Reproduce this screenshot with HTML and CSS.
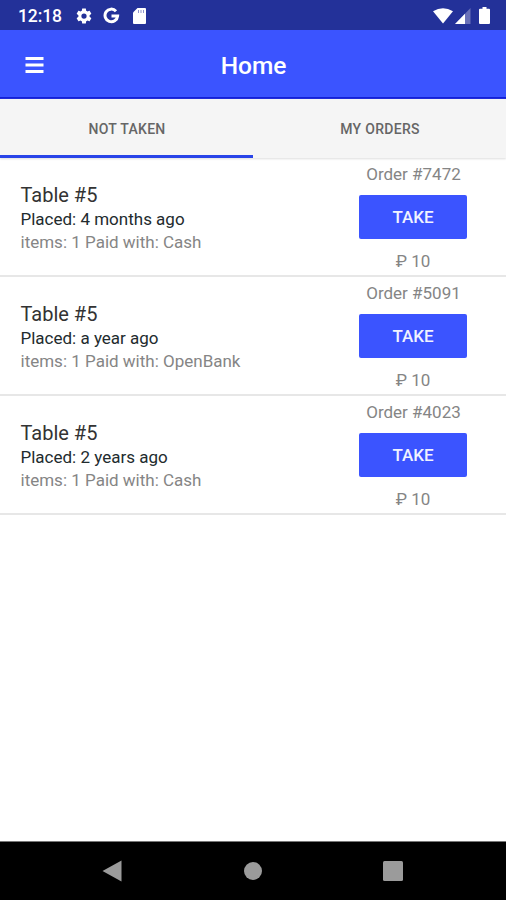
FILE: index.html
```html
<!DOCTYPE html>
<html lang="en">
<head>
<meta charset="utf-8">
<title>Home</title>
<link rel="stylesheet" href="styles.css">
</head>
<body>
<div class="status">
  <span class="clock">12:18</span>
  <svg class="gear" width="18" height="18" viewBox="0 0 24 24" fill="#fff"><path d="M19.43 12.98c.04-.32.07-.64.07-.98s-.03-.66-.07-.98l2.11-1.65c.19-.15.24-.42.12-.64l-2-3.46c-.12-.22-.39-.3-.61-.22l-2.49 1c-.52-.4-1.08-.73-1.69-.98l-.38-2.65C14.46 2.18 14.25 2 14 2h-4c-.25 0-.46.18-.49.42l-.38 2.65c-.61.25-1.17.59-1.69.98l-2.49-1c-.23-.09-.49 0-.61.22l-2 3.46c-.13.22-.07.49.12.64l2.11 1.65c-.04.32-.07.65-.07.98s.03.66.07.98l-2.11 1.65c-.19.15-.24.42-.12.64l2 3.46c.12.22.39.3.61.22l2.49-1c.52.4 1.08.73 1.69.98l.38 2.65c.03.24.24.42.49.42h4c.25 0 .46-.18.49-.42l.38-2.65c.61-.25 1.17-.59 1.69-.98l2.49 1c.23.09.49 0 .61-.22l2-3.46c.12-.22.07-.49-.12-.64zM12 15.5a3.5 3.5 0 1 1 0-7 3.5 3.5 0 0 1 0 7z"/></svg>
  <svg class="google" width="17" height="17" viewBox="0 0 17 17" fill="none" stroke="#fff" stroke-width="3"><path d="M13 4.200A6.300 6.300 0 1 0 14.600 9H8.500"/></svg>
  <svg class="card" width="13" height="16" viewBox="0 0 13 16"><path fill="#fff" d="M4.500 0H12q1 0 1 1v14q0 1-1 1H1q-1 0-1-1V4.500z"/><path stroke="#8d93cc" d="M5.500 2v3M8 2v3M10.500 2v3"/></svg>
  <div class="signals">
    <svg width="20" height="16" viewBox="0 0 20 16"><path fill="#fff" d="M0 3.200Q10-2.600 20 3.200L10 15.500z"/></svg>
    <svg width="16" height="16" viewBox="0 0 16 16"><path fill="#6970b8" d="M15.500 0v16H0z"/><path fill="#fff" d="M10 5.700V16H0z"/></svg>
    <svg class="battery" width="11" height="17" viewBox="0 0 11 17"><path fill="#fff" d="M3.500 0h4v1.700H10q1 0 1 1V16q0 1-1 1H1q-1 0-1-1V2.700q0-1 1-1h2.500z"/></svg>
  </div>
</div>
<header class="header">
  <svg class="menu" width="19" height="16" viewBox="0 0 19 16" fill="#fff"><path d="M.5 0h18v3H.5zM.5 6.500h18v3H.5zM.5 13h18v3H.5z"/></svg>
  <h1>Home</h1>
</header>
<nav class="tabs">
  <div class="tab active"><span>NOT TAKEN</span></div>
  <div class="tab"><span>MY ORDERS</span></div>
</nav>
<main class="orders">
  <section class="order">
    <div class="info"><div class="table"><span>Table #5</span></div><div class="placed"><span>Placed: 4 months ago</span></div><div class="items"><span>items: 1 Paid with: Cash</span></div></div>
    <div class="side"><span class="number">Order #7472</span><button>TAKE</button><span class="price">₽ 10</span></div>
  </section>
  <section class="order">
    <div class="info"><div class="table"><span>Table #5</span></div><div class="placed"><span>Placed: a year ago</span></div><div class="items"><span>items: 1 Paid with: OpenBank</span></div></div>
    <div class="side"><span class="number">Order #5091</span><button>TAKE</button><span class="price">₽ 10</span></div>
  </section>
  <section class="order">
    <div class="info"><div class="table"><span>Table #5</span></div><div class="placed"><span>Placed: 2 years ago</span></div><div class="items"><span>items: 1 Paid with: Cash</span></div></div>
    <div class="side"><span class="number">Order #4023</span><button>TAKE</button><span class="price">₽ 10</span></div>
  </section>
</main>
<footer class="navbar">
  <svg width="20" height="22" viewBox="0 0 20 22"><path fill="#9b9b9b" d="M19.500.5v21L.5 11z"/></svg>
  <svg width="18" height="18" viewBox="0 0 18 18"><circle cx="9" cy="9" r="9" fill="#9b9b9b"/></svg>
  <svg width="20" height="20" viewBox="0 0 20 20"><rect width="20" height="20" rx="1.500" fill="#9b9b9b"/></svg>
</footer>
</body>
</html>
```
FILE: styles.css
```css
* { box-sizing: border-box; }
body {
  margin: 0;
  height: 900px;
  display: flex;
  flex-direction: column;
  background: #fff;
  font-family: Roboto, "Liberation Sans", sans-serif;
  overflow: hidden;
}
svg { display: block; flex: none; }
.status {
  height: 30px;
  flex: none;
  display: flex;
  align-items: center;
  padding: 1px 16px 0 18px;
  background: #233199;
  color: #fff;
}
.clock { font-size: 17.5px; font-weight: 500; width: 57px; letter-spacing: -.1px; }
.google { margin-left: 10px; }
.card { margin-left: 13px; }
.signals { margin-left: auto; display: flex; align-items: center; gap: 2px; }
.battery { margin-left: 6px; }
.header {
  height: 69px;
  flex: none;
  display: grid;
  grid-template-columns: 60px 1fr 60px;
  align-items: center;
  background: #3b54ff;
  border-bottom: 2px solid #1420d8;
  padding-top: 2px;
}
.menu { margin-left: 25px; }
h1 { margin: 0; padding: 2px 0 0 1px; text-align: center; font-size: 24.5px; font-weight: 500; color: #fff; }
.tabs {
  height: 59px;
  flex: none;
  display: flex;
  background: #f5f5f5;
  box-shadow: 0 1px 2px #ddd;
}
.tab {
  flex: 1;
  display: flex;
  align-items: center;
  justify-content: center;
  padding: 3px 0 0 1px;
  border-bottom: 3px solid transparent;
  font-size: 14px;
  font-weight: 500;
  letter-spacing: .3px;
  color: #666;
}
.tab.active { border-color: #2944e8; }
.orders { flex: 1; }
.order {
  height: 119px;
  display: flex;
  justify-content: space-between;
  border-bottom: 2px solid #e7e7e7;
}
.info { padding: 25px 0 0 20.5px; }
.table { font-size: 20px; line-height: 24px; color: #333; }
.placed { font-size: 17px; line-height: 24px; color: #222b2e; }
.items { font-size: 17px; line-height: 23px; color: #858585; }
.side {
  width: 108px;
  margin-right: 39px;
  display: flex;
  flex-direction: column;
  align-items: center;
  color: #858585;
  font-size: 17px;
  line-height: 20px;
  padding-top: 6px;
}
.number { padding-left: 1px; }
button {
  width: 108px;
  height: 44px;
  margin: 11px 0 12px;
  padding: 0;
  border: 0;
  border-radius: 2px;
  background: #3b54ff;
  color: #f0f2ff;
  font: 500 17px Roboto, sans-serif;
}
.navbar {
  height: 59px;
  flex: none;
  display: flex;
  align-items: center;
  justify-content: space-between;
  padding: 0 103px 0 102px;
  background: #000;
  border-top: 1px solid #777;
}
```
